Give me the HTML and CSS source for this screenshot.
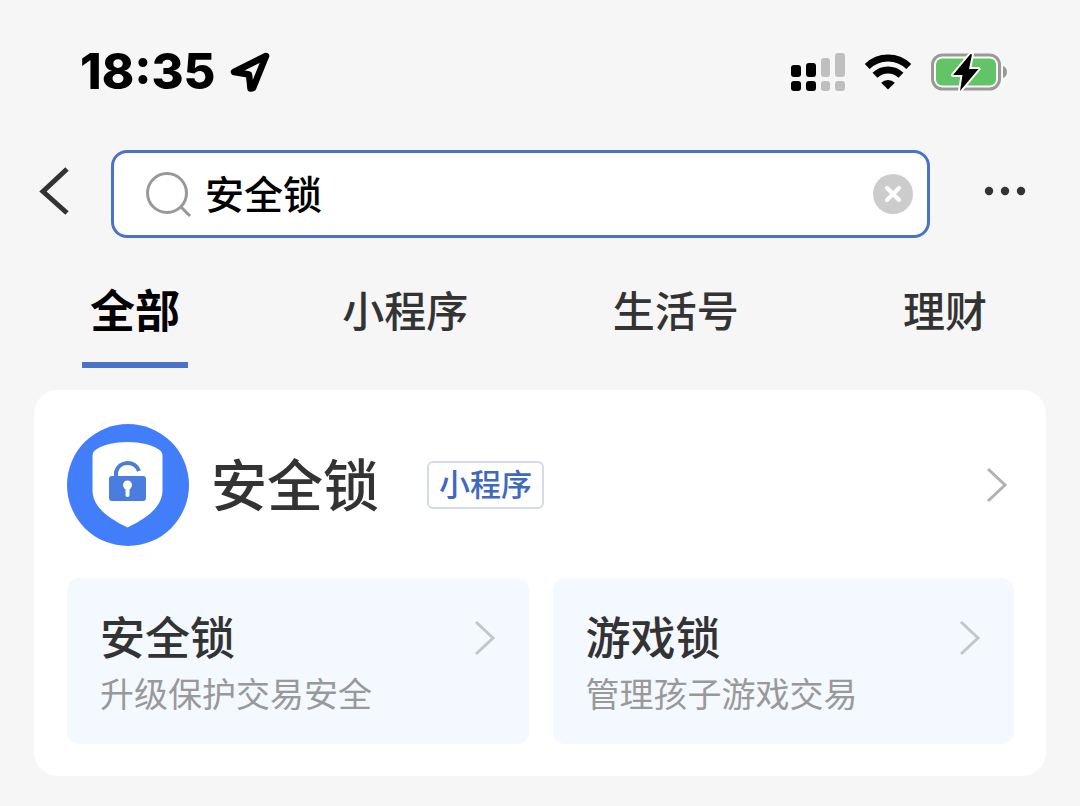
FILE: index.html
```
<!DOCTYPE html>
<html lang="zh-CN">
<head>
<meta charset="UTF-8">
<title>安全锁 - 搜索</title>
<meta name="viewport" content="width=device-width,initial-scale=1">
<link rel="stylesheet" href="styles.css">
</head>
<body>

<!-- Status bar -->
<div class="status">
  <span class="time">18:35</span>
  <svg class="location" width="40" height="40" viewBox="0 0 40 40" aria-hidden="true">
    <path d="M36 4 L4 20 L19 22.500 L20.500 36.500 L23 36 Z" fill="none" stroke="#000" stroke-width="6.500" stroke-linejoin="round"/>
  </svg>
  <div class="status-icons">
    <svg width="54" height="40" viewBox="0 0 54 40" aria-hidden="true">
      <g fill="#000">
        <rect x="0" y="13" width="10" height="12" rx="3"/>
        <rect x="15" y="11" width="10" height="14" rx="3"/>
        <rect x="0" y="29" width="10" height="10" rx="3"/>
        <rect x="15" y="29" width="10" height="10" rx="3"/>
      </g>
      <g fill="#bfbfbf">
        <rect x="30" y="6" width="9" height="19" rx="3"/>
        <rect x="44" y="1" width="10" height="24" rx="3"/>
        <rect x="30" y="29" width="9" height="10" rx="3"/>
        <rect x="44" y="29" width="10" height="10" rx="3"/>
      </g>
    </svg>
    <svg width="46" height="40" viewBox="0 0 46 40" aria-hidden="true">
      <g fill="none" stroke="#000" stroke-width="7">
        <path d="M2.200 14.500 A29.500 29.500 0 0 1 43.800 14.500"/>
        <path d="M10 23.300 A18.300 18.300 0 0 1 36 23.300"/>
      </g>
      <path d="M23 37.500 L16.200 30.700 A9.800 9.800 0 0 1 29.800 30.700 Z"/>
    </svg>
    <svg width="76" height="40" viewBox="0 0 76 40" aria-hidden="true">
      <rect x="1.500" y="3" width="67" height="34" rx="10" fill="#fff" stroke="#999" stroke-width="3"/>
      <rect x="5" y="6.500" width="60" height="27" rx="6" fill="#62c466"/>
      <path d="M72 14 Q76 15.500 76 20 Q76 24.500 72 26 Z" fill="#999"/>
      <path d="M39.500 2 L22 23 H31.500 L29 39 L47.500 17 H38 L41 2.500 Z" fill="#000" stroke="#fff" stroke-width="4" stroke-linejoin="round" paint-order="stroke"/>
    </svg>
  </div>
</div>

<!-- Search -->
<form class="search-row">
  <button type="button" class="back" aria-label="返回">
    <svg width="32" height="48" viewBox="0 0 32 48"><path d="M29 2 L5 24.500 L29 46" fill="none" stroke="#333" stroke-width="5"/></svg>
  </button>
  <div class="search-box">
    <svg width="46" height="46" viewBox="0 0 46 46" aria-hidden="true">
      <path d="M35 36 L44 45" stroke="#999" stroke-width="3"/>
      <circle cx="21" cy="22" r="19.500" fill="none" stroke="#999" stroke-width="3"/>
    </svg>
    <input type="text" value="安全锁" aria-label="搜索">
    <button type="button" class="clear" aria-label="清除">
      <svg width="40" height="40" viewBox="0 0 40 40">
        <circle cx="20" cy="20" r="20" fill="#ccc"/>
        <path d="M14 14 L26 26 M26 14 L14 26" stroke="#fff" stroke-width="4" stroke-linecap="round"/>
      </svg>
    </button>
  </div>
  <button type="button" class="more" aria-label="更多">
    <svg width="42" height="10" viewBox="0 0 42 10" fill="#333"><circle cx="5" cy="5" r="4.200"/><circle cx="21" cy="5" r="4.200"/><circle cx="37" cy="5" r="4.200"/></svg>
  </button>
</form>

<nav class="tabs">
  <a href="#" class="tab active" aria-current="page">全部</a>
  <a href="#" class="tab">小程序</a>
  <a href="#" class="tab">生活号</a>
  <a href="#" class="tab">理财</a>
</nav>

<!-- Result -->
<main class="card">
  <a href="#" class="result">
    <svg class="logo" width="122" height="122" viewBox="0 0 122 122" aria-hidden="true">
      <circle cx="61" cy="61" r="61" fill="#437efa"/>
      <path d="M60.500 18 C74 18 85 21 91 25 Q95.500 27 95.500 32 V66 C95.500 83 80 94 60.500 103.500 C41 94 25.500 83 25.500 66 V32 Q25.500 27 30 25 C36 21 47 18 60.500 18 Z" fill="#fff"/>
      <path d="M49 55 V48 A12 12 0 0 1 72 47" fill="none" stroke="#4a7ddd" stroke-width="4"/>
      <rect x="42" y="52" width="37" height="25" rx="3" fill="#4a7ddd"/>
      <circle cx="60.500" cy="61" r="4.500" fill="#fff"/>
      <path d="M60.500 62 V71" stroke="#fff" stroke-width="4" stroke-linecap="round"/>
    </svg>
    <h1>安全锁</h1>
    <span class="tag">小程序</span>
    <svg class="arrow" width="22" height="36" viewBox="0 0 22 36" aria-hidden="true"><path d="M2 2 L19 18 L2 34"/></svg>
  </a>

  <div class="tiles">
    <a href="#" class="tile">
      <div>
        <h2>安全锁</h2>
        <p>升级保护交易安全</p>
      </div>
      <svg class="arrow" width="22" height="36" viewBox="0 0 22 36" aria-hidden="true"><path d="M2 2 L19 18 L2 34"/></svg>
    </a>
    <a href="#" class="tile">
      <div>
        <h2>游戏锁</h2>
        <p>管理孩子游戏交易</p>
      </div>
      <svg class="arrow" width="22" height="36" viewBox="0 0 22 36" aria-hidden="true"><path d="M2 2 L19 18 L2 34"/></svg>
    </a>
  </div>
</main>

</body>
</html>
```
FILE: styles.css
```
:root{
  --bg:#f6f6f6;
  --blue:#4a72c8;
  --text:#333;
}
*{box-sizing:border-box;}
body{
  margin:0; background:var(--bg); color:var(--text);
  font-family:"Noto Sans CJK SC", sans-serif; font-weight:500;
}
a{color:inherit; text-decoration:none;}
button{padding:0; border:0; background:none; cursor:pointer;}
svg{display:block; flex:none;}
h1, h2, p{margin:0;}

/* status bar */
.status{
  display:flex; align-items:center;
  height:144px; padding:0 73px 0 80px;
}
.time{
  font-family:Inter, sans-serif; font-size:49px; line-height:60px; font-weight:800; color:#000;
}
.location{margin-left:14px;}
.status-icons{display:flex; gap:20px; margin-left:auto;}

/* search */
.search-row{
  display:flex; align-items:flex-start;
  margin-top:6px; padding:0 54px 0 38px;
}
.back, .more{
  display:flex; align-items:center; height:82px;
}
.search-box{
  flex:1; min-width:0; height:88px; margin:0 54px 0 41px; padding:0 14px 0 32px;
  display:flex; align-items:center; gap:13px;
  background:#fff; border:3px solid var(--blue); border-radius:16px;
}
.search-box input{
  flex:1; min-width:0; padding:0 0 4px; border:0; outline:0; background:none;
  font:inherit; font-size:39px; line-height:60px; color:#000;
}

/* tabs */
.tabs{
  display:grid; grid-template-columns:26fr 27fr 29fr auto;
  margin-top:42px; padding:0 93px 0 82px;
}
.tab{
  justify-self:start; padding-bottom:24px; border-bottom:6px solid transparent;
  font-size:42px; line-height:58px;
}
.tab.active{
  padding-left:8px; padding-right:8px; border-color:var(--blue);
  font-size:45px; font-weight:700; color:#000;
}

/* result card */
.card{
  margin:22px 34px 30px; padding:34px 32px 32px 33px;
  background:#fff; border-radius:24px;
}
.result{display:flex; align-items:center; padding-right:6px;}
.result h1{margin-left:22px; padding-bottom:6px; font-size:56px; line-height:80px; font-weight:500;}
.tag{
  margin-left:48px; padding:0 10px 4px;
  border:2px solid #d3dbe6; border-radius:6px;
  font-size:31px; line-height:40px; color:#3f69bd;
}
.arrow{fill:none; stroke:#b2b2b2; stroke-width:3;}
.result .arrow{margin-left:auto;}

.tiles{
  display:grid; grid-template-columns:1fr 1fr; gap:24px; margin-top:32px;
}
.tile{
  display:flex; justify-content:space-between;
  padding:26px 33px; background:#f4f8ff; border-radius:12px;
}
.tile h2{font-size:45px; line-height:64px; font-weight:500;}
.tile p{font-size:34px; line-height:50px; font-weight:400; color:#999;}
.tile .arrow{margin-top:16px; stroke:#c3c6cc;}
```
